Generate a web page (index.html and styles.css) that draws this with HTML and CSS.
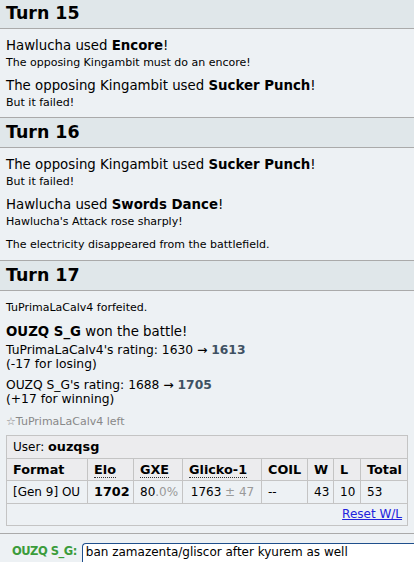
FILE: index.html
```html
<!DOCTYPE html>
<html lang="en">
<head>
<meta charset="utf-8">
<title>Battle log</title>
<link rel="stylesheet" href="styles.css">
</head>
<body>
<div class="page">
  <div class="log">
    <h2 class="turn first">Turn 15</h2>
    <div class="sect">
      <div class="msg">
        <div class="big">Hawlucha used <strong>Encore</strong>!</div>
        <div class="small">The opposing Kingambit must do an encore!</div>
      </div>
      <div class="msg">
        <div class="big">The opposing Kingambit used <strong>Sucker Punch</strong>!</div>
        <div class="small">But it failed!</div>
      </div>
    </div>

    <h2 class="turn">Turn 16</h2>
    <div class="sect">
      <div class="msg">
        <div class="big">The opposing Kingambit used <strong>Sucker Punch</strong>!</div>
        <div class="small">But it failed!</div>
      </div>
      <div class="msg">
        <div class="big">Hawlucha used <strong>Swords Dance</strong>!</div>
        <div class="small">Hawlucha's Attack rose sharply!</div>
      </div>
      <div class="msg">
        <div class="small solo">The electricity disappeared from the battlefield.</div>
      </div>
    </div>

    <h2 class="turn">Turn 17</h2>
    <div class="sect last">
      <div class="msg first-msg">
        <div class="small solo">TuPrimaLaCalv4 forfeited.</div>
      </div>
      <div class="msg">
        <div class="big"><strong>OUZQ S_G</strong> won the battle!</div>
      </div>
      <div class="msg rating tight">
        <div class="rline">TuPrimaLaCalv4's rating: 1630 &rarr; <strong class="num">1613</strong></div>
        <div class="rline">(-17 for losing)</div>
      </div>
      <div class="msg rating">
        <div class="rline">OUZQ S_G's rating: 1688 &rarr; <strong class="num">1705</strong></div>
        <div class="rline">(+17 for winning)</div>
      </div>
      <div class="msg">
        <div class="small solo left">&#9734;TuPrimaLaCalv4 left</div>
      </div>

      <table class="ladder">
        <colgroup>
          <col class="c-format"><col class="c-elo"><col class="c-gxe"><col class="c-glicko"><col class="c-coil"><col class="c-w"><col class="c-l"><col class="c-total">
        </colgroup>
        <tr class="head">
          <th colspan="8" class="user">User: <strong>ouzqsg</strong></th>
        </tr>
        <tr class="head">
          <th>Format</th>
          <th><abbr>Elo</abbr></th>
          <th><abbr>GXE</abbr></th>
          <th><abbr>Glicko-1</abbr></th>
          <th>COIL</th>
          <th>W</th>
          <th>L</th>
          <th>Total</th>
        </tr>
        <tr>
          <td>[Gen 9] OU</td>
          <td><strong>1702</strong></td>
          <td>80<span class="dim">.0%</span></td>
          <td class="center">1763 <span class="dim">&plusmn; 47</span></td>
          <td>--</td>
          <td>43</td>
          <td>10</td>
          <td>53</td>
        </tr>
        <tr>
          <td colspan="8" class="reset"><a href="#">Reset W/L</a></td>
        </tr>
      </table>
    </div>
  </div>

  <div class="chatbar">
    <span class="me">OUZQ S_G:</span>
    <div class="inputbox">ban zamazenta/gliscor after kyurem as well</div>
  </div>
</div>
</body>
</html>
```

FILE: styles.css
```css
html, body {
  margin: 0;
  padding: 0;
}

body {
  background: #edf1f4;
  color: #000;
  font-family: "DejaVu Sans", Verdana, sans-serif;
  overflow: hidden;
  height: 562px;
}

.page {
  width: 414px;
}

.turn {
  margin: 0;
  height: 29px;
  line-height: 29px;
  padding: 0 6px;
  font-size: 17.4px;
  font-weight: bold;
  background: #e0e7ea;
  border-top: 1px solid #aaa;
  border-bottom: 1px solid #aaa;
}

.turn.first {
  margin-top: -2px;
}

.sect {
  padding: 8px 6px 7px;
  display: flex;
  flex-direction: column;
  gap: 7px;
}

.sect.last {
  gap: 0;
  padding-bottom: 7px;
}

.sect.last .msg {
  margin-top: 7px;
}

.sect.last .msg.first-msg {
  margin-top: 0;
}

.sect.last .msg.tight {
  margin-top: 2px;
}

.big {
  font-size: 13.33px;
  line-height: 18px;
}

.small {
  font-size: 11px;
  line-height: 15px;
}

.small.solo {
  line-height: 17px;
}

.small.left {
  color: #888;
}

.rline {
  font-size: 12.3px;
  line-height: 14px;
}

.num {
  color: #3f5163;
}

.ladder {
  margin-top: 5px;
  width: 401px;
  table-layout: fixed;
  border-collapse: collapse;
  font-size: 12px;
  border: 1px solid #c4c4c4;
}

.c-format { width: 81px; }
.c-elo { width: 46px; }
.c-gxe { width: 49px; }
.c-glicko { width: 79px; }
.c-coil { width: 46px; }
.c-w { width: 26px; }
.c-l { width: 27px; }
.c-total { width: 47px; }

.ladder th,
.ladder td {
  border: 1px solid #c4c4c4;
  padding: 2px 5px 2px 6px;
  height: 17px;
  line-height: 17px;
  text-align: left;
  white-space: nowrap;
  overflow: hidden;
}

.ladder tr.head th {
  background: #ececee;
}

.ladder th {
  font-weight: bold;
  font-size: 12.8px;
}

.ladder th.user {
  font-weight: normal;
  font-size: 12px;
}

.ladder th.user strong {
  font-size: 12.8px;
}

.ladder abbr {
  text-decoration: none;
  border-bottom: 1px dotted #333;
}

.ladder td strong {
  font-size: 12.8px;
}

.ladder .dim {
  color: #999;
}

.ladder td.center {
  text-align: center;
}

.ladder td.reset {
  text-align: right;
}

.ladder td.reset a {
  color: #2222dd;
  text-decoration: underline;
}

.chatbar {
  border-top: 1px solid #aaa;
  padding: 9px 0 0 12px;
  display: flex;
  align-items: flex-start;
  gap: 5px;
}

.me {
  color: #3b9c3b;
  font-weight: bold;
  font-size: 11.5px;
  letter-spacing: -0.5px;
  line-height: 17px;
  padding-top: 0;
}

.inputbox {
  flex: 1;
  height: 28px;
  box-sizing: border-box;
  border: 1px solid #1f4f8c;
  border-right: none;
  border-radius: 4px 0 0 4px;
  background: #fff;
  font-size: 12px;
  line-height: 17px;
  padding: 0 0 0 3px;
  color: #000;
  white-space: nowrap;
}
```
